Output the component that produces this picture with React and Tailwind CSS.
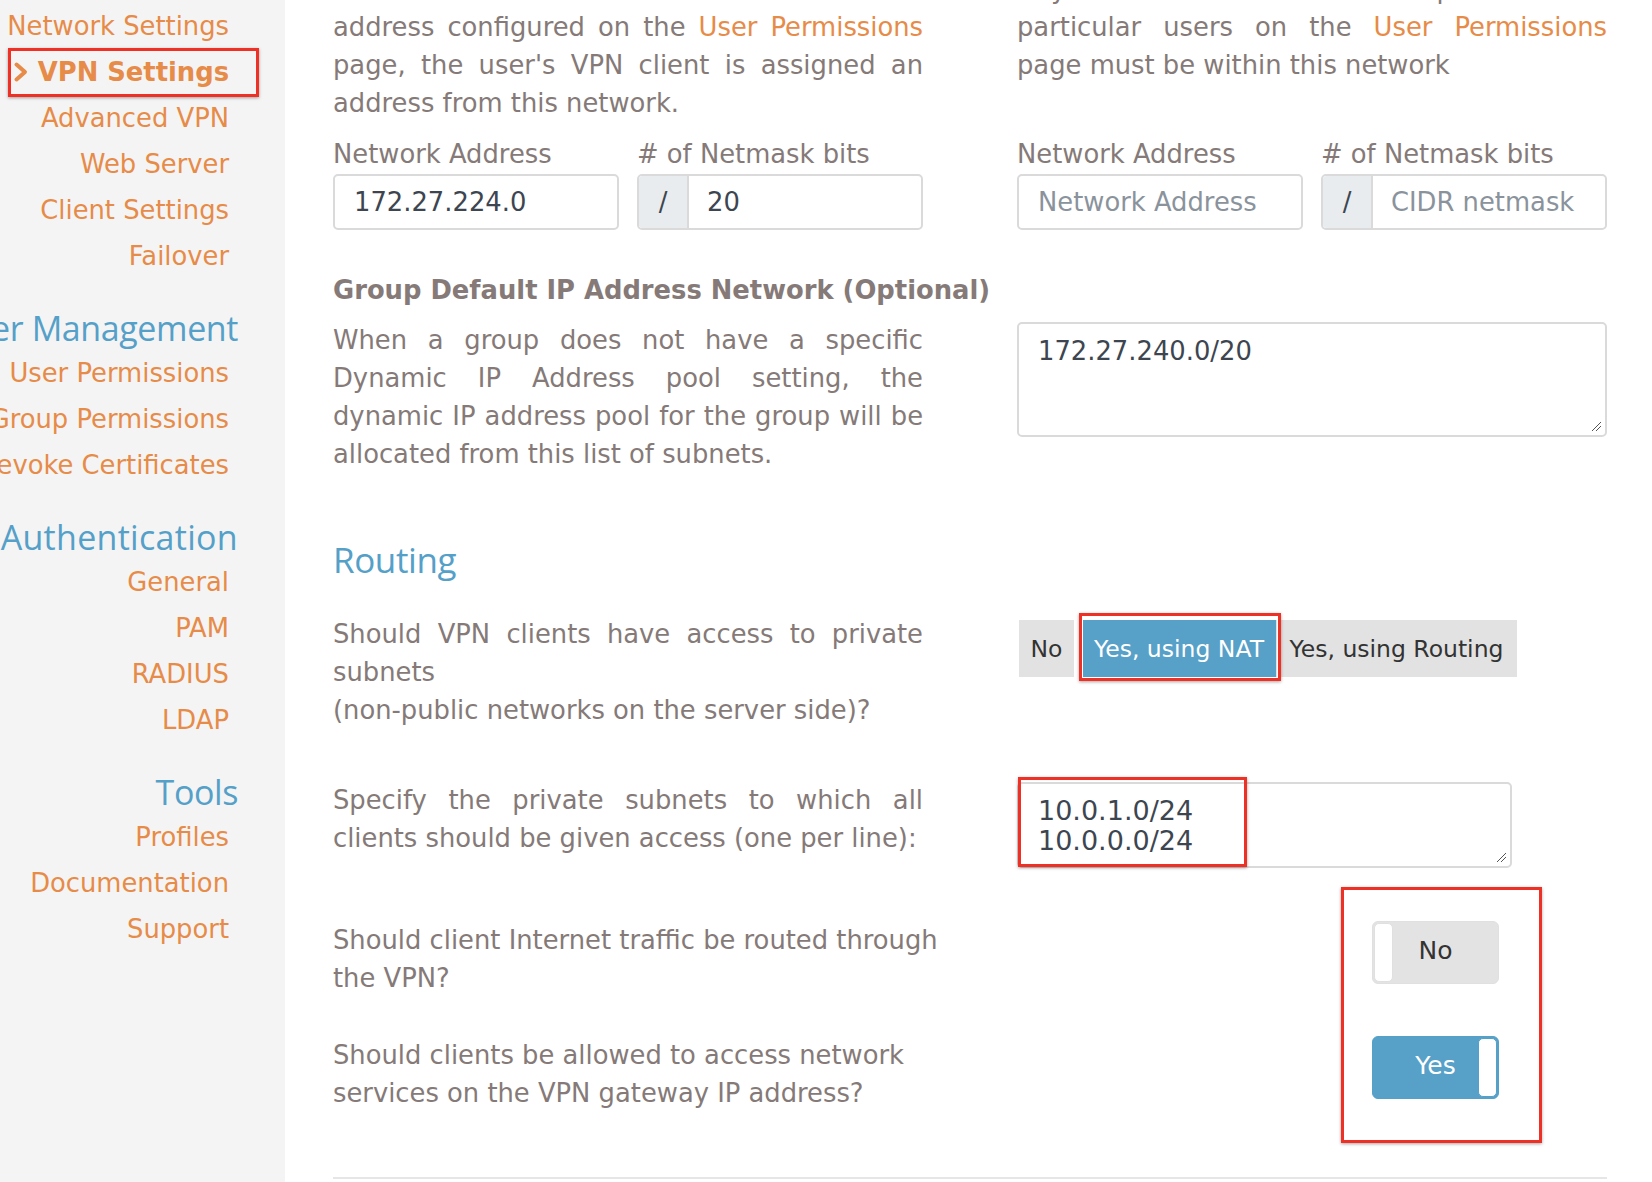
import React from "react";

const Item = ({ children }) => (
  <div className="flex h-[46px] items-center justify-end pr-[56px]">
    <span className="shrink-0 whitespace-nowrap text-[25.8px] text-[#e78b48]">{children}</span>
  </div>
);

const Heading = ({ children, wide }) => (
  <div className="mt-[27px] flex h-[44px] items-center justify-end pr-[47px]">
    <span
      className={
        "shrink-0 whitespace-nowrap font-['Open_Sans',sans-serif] text-[34px] text-[#55a0c8] " +
        (wide ? "tracking-[0.3px]" : "tracking-[-0.4px]")
      }
    >
      {children}
    </span>
  </div>
);

const J = ({ children }) => <div className="text-justify [text-align-last:justify] whitespace-nowrap">{children}</div>;
const L = ({ children }) => <div className="whitespace-nowrap">{children}</div>;
const Link = ({ children }) => <span className="text-[#e78b48]">{children}</span>;

const AddrField = ({ value, placeholder }) => (
  <div className="flex flex-col">
    <div className="h-[38px] leading-[38px]">Network Address</div>
    <div className="mt-px flex h-[56px] items-center rounded-[5px] border-2 border-[#dadada] bg-white px-[19px]">
      {value ? <span className="text-[#3d4650]">{value}</span> : <span className="text-[#8a939c]">{placeholder}</span>}
    </div>
  </div>
);

const MaskField = ({ value, placeholder }) => (
  <div className="flex flex-col">
    <div className="h-[38px] leading-[38px]"># of Netmask bits</div>
    <div className="mt-px flex h-[56px] overflow-hidden rounded-[5px] border-2 border-[#dadada] bg-white">
      <div className="flex w-[50px] items-center justify-center border-r-2 border-[#dadada] bg-[#e9ecef] text-[#3d4650]">/</div>
      <div className="flex items-center px-[18px]">
        {value ? <span className="text-[#3d4650]">{value}</span> : <span className="text-[#8a939c]">{placeholder}</span>}
      </div>
    </div>
  </div>
);

const ResizeGrip = () => (
  <svg className="absolute bottom-[3px] right-[3px]" width="12" height="12" viewBox="0 0 12 12">
    <line x1="2" y1="11" x2="11" y2="2" stroke="#555" strokeWidth="1" />
    <line x1="6" y1="11" x2="11" y2="6" stroke="#555" strokeWidth="1" />
  </svg>
);

const Toggle = ({ on, label }) => (
  <div
    className={
      "relative flex h-[63px] w-[127px] items-center justify-center rounded-[6px] border " +
      (on ? "border-[#53a0c9] bg-[#57a0c8] text-white" : "border-[#e0e0e0] bg-[#e3e3e3] text-[#333]")
    }
  >
    <div
      className={
        "absolute top-[1px] bottom-[1px] w-[19px] rounded-[5px] bg-white " +
        (on ? "right-[1px] border border-[#53a0c9]" : "left-[1px] border border-[#e0e0e0]")
      }
    />
    <span className="relative -mt-[3px] text-[25px]">{label}</span>
  </div>
);

export default function App() {
  return (
    <div className="relative flex h-[1182px] w-[1652px] overflow-hidden bg-white font-['DejaVu_Sans',sans-serif]">
      {/* Sidebar */}
      <aside className="relative w-[285px] shrink-0 overflow-hidden bg-[#f4f4f4] pt-[3px]">
        <Item>Network Settings</Item>
        <div className="flex h-[46px] items-center justify-end pr-[56px]">
          <svg className="mr-[9px] shrink-0" width="16" height="22" viewBox="0 0 16 22">
            <polyline points="3.5,3.5 12,11 3.5,18.5" fill="none" stroke="#e78b48" strokeWidth="4" strokeLinecap="round" strokeLinejoin="round" />
          </svg>
          <span className="shrink-0 whitespace-nowrap text-[25.8px] font-bold text-[#e78b48]">VPN Settings</span>
        </div>
        <Item>Advanced VPN</Item>
        <Item>Web Server</Item>
        <Item>Client Settings</Item>
        <Item>Failover</Item>
        <Heading>User Management</Heading>
        <Item>User Permissions</Item>
        <Item>Group Permissions</Item>
        <Item>Revoke Certificates</Item>
        <Heading wide>Authentication</Heading>
        <Item>General</Item>
        <Item>PAM</Item>
        <Item>RADIUS</Item>
        <Item>LDAP</Item>
        <Heading>Tools</Heading>
        <Item>Profiles</Item>
        <Item>Documentation</Item>
        <Item>Support</Item>
      </aside>

      {/* Main */}
      <main className="relative flex-1 pl-[48px] pr-[45px] text-[25.8px] leading-[38px] text-[#857a78]">
        <div className="-mt-[30px] grid grid-cols-[590px_590px] gap-x-[94px]">
          <div>
            <J>When a user does not have a static VPN IP</J>
            <J>
              address configured on the <Link>User Permissions</Link>
            </J>
            <J>page, the user's VPN client is assigned an</J>
            <L>address from this network.</L>
            <div className="mt-[13px] grid grid-cols-2 gap-x-[18px]">
              <AddrField value="172.27.224.0" />
              <MaskField value="20" />
            </div>
          </div>
          <div>
            <J>Any static IP addresses specified for</J>
            <J>
              particular users on the <Link>User Permissions</Link>
            </J>
            <L>page must be within this network</L>
            <div className="mt-[51px] grid grid-cols-2 gap-x-[18px]">
              <AddrField placeholder="Network Address" />
              <MaskField placeholder="CIDR netmask" />
            </div>
          </div>
        </div>

        <div className="mt-[41px] whitespace-nowrap font-bold">Group Default IP Address Network (Optional)</div>

        <div className="mt-[12px] grid grid-cols-[590px_590px] gap-x-[94px]">
          <div>
            <J>When a group does not have a specific</J>
            <J>Dynamic IP Address pool setting, the</J>
            <J>dynamic IP address pool for the group will be</J>
            <L>allocated from this list of subnets.</L>
          </div>
          <div className="relative mt-px h-[115px] rounded-[5px] border-2 border-[#dadada] px-[19px] pt-[8px] text-[#3d4650]">
            172.27.240.0/20
            <ResizeGrip />
          </div>
        </div>

        <div className="mt-[65px] h-[44px] font-['Open_Sans',sans-serif] text-[35px] leading-[44px] tracking-[-0.4px] text-[#55a0c8]">Routing</div>

        <div className="mt-[33px] grid grid-cols-[590px_590px] gap-x-[94px]">
          <div>
            <J>Should VPN clients have access to private</J>
            <L>subnets</L>
            <L>(non-public networks on the server side)?</L>
          </div>
          <div className="pl-[2px] pt-[5px]">
            <div className="flex h-[57px] w-fit bg-white text-[23.5px] text-[#333]">
              <div className="flex w-[55px] items-center justify-center bg-[#e2e2e2]">No</div>
              <div className="ml-[8px] flex w-[194px] items-center justify-center bg-[#57a0c8] text-white">Yes, using NAT</div>
              <div className="flex w-[241px] items-center justify-center bg-[#e2e2e2]">Yes, using Routing</div>
            </div>
          </div>
        </div>

        <div className="mt-[52px] grid grid-cols-[590px_590px] gap-x-[94px]">
          <div>
            <J>Specify the private subnets to which all</J>
            <L>clients should be given access (one per line):</L>
          </div>
          <div className="relative mt-px h-[86px] w-[495px] rounded-[5px] border-2 border-[#dadada] px-[19px] pt-[12px] text-[27px] leading-[30px] text-[#3d4650]">
            <div>10.0.1.0/24</div>
            <div>10.0.0.0/24</div>
            <ResizeGrip />
          </div>
        </div>

        <div className="mt-[53px] flex">
          <div className="w-[684px]">
            <L>Should client Internet traffic be routed through</L>
            <L>the VPN?</L>
          </div>
          <div className="pl-[355px]">
            <Toggle label="No" />
          </div>
        </div>

        <div className="mt-[39px] flex">
          <div className="w-[684px]">
            <L>Should clients be allowed to access network</L>
            <L>services on the VPN gateway IP address?</L>
          </div>
          <div className="pl-[355px]">
            <Toggle on label="Yes" />
          </div>
        </div>

        <div className="mt-[65px] h-[2px] bg-[#e6e6e6]" />
      </main>

      {/* Annotation overlays */}
      <div className="pointer-events-none absolute left-[8px] top-[48px] h-[49px] w-[251px] border-[3px] border-[#ee3124] shadow-[0_1px_3px_rgba(0,0,0,0.35)]" />
      <div className="pointer-events-none absolute left-[1079px] top-[613px] h-[68px] w-[202px] border-[3px] border-[#ee3124] shadow-[inset_0_0_0_1px_#fff,0_1px_3px_rgba(0,0,0,0.35)]" />
      <div className="pointer-events-none absolute left-[1018px] top-[777px] h-[90px] w-[229px] border-[3px] border-[#ee3124] shadow-[0_1px_3px_rgba(0,0,0,0.35)]" />
      <div className="pointer-events-none absolute left-[1341px] top-[887px] h-[256px] w-[201px] border-[3px] border-[#ee3124] shadow-[0_1px_3px_rgba(0,0,0,0.35)]" />
    </div>
  );
}
